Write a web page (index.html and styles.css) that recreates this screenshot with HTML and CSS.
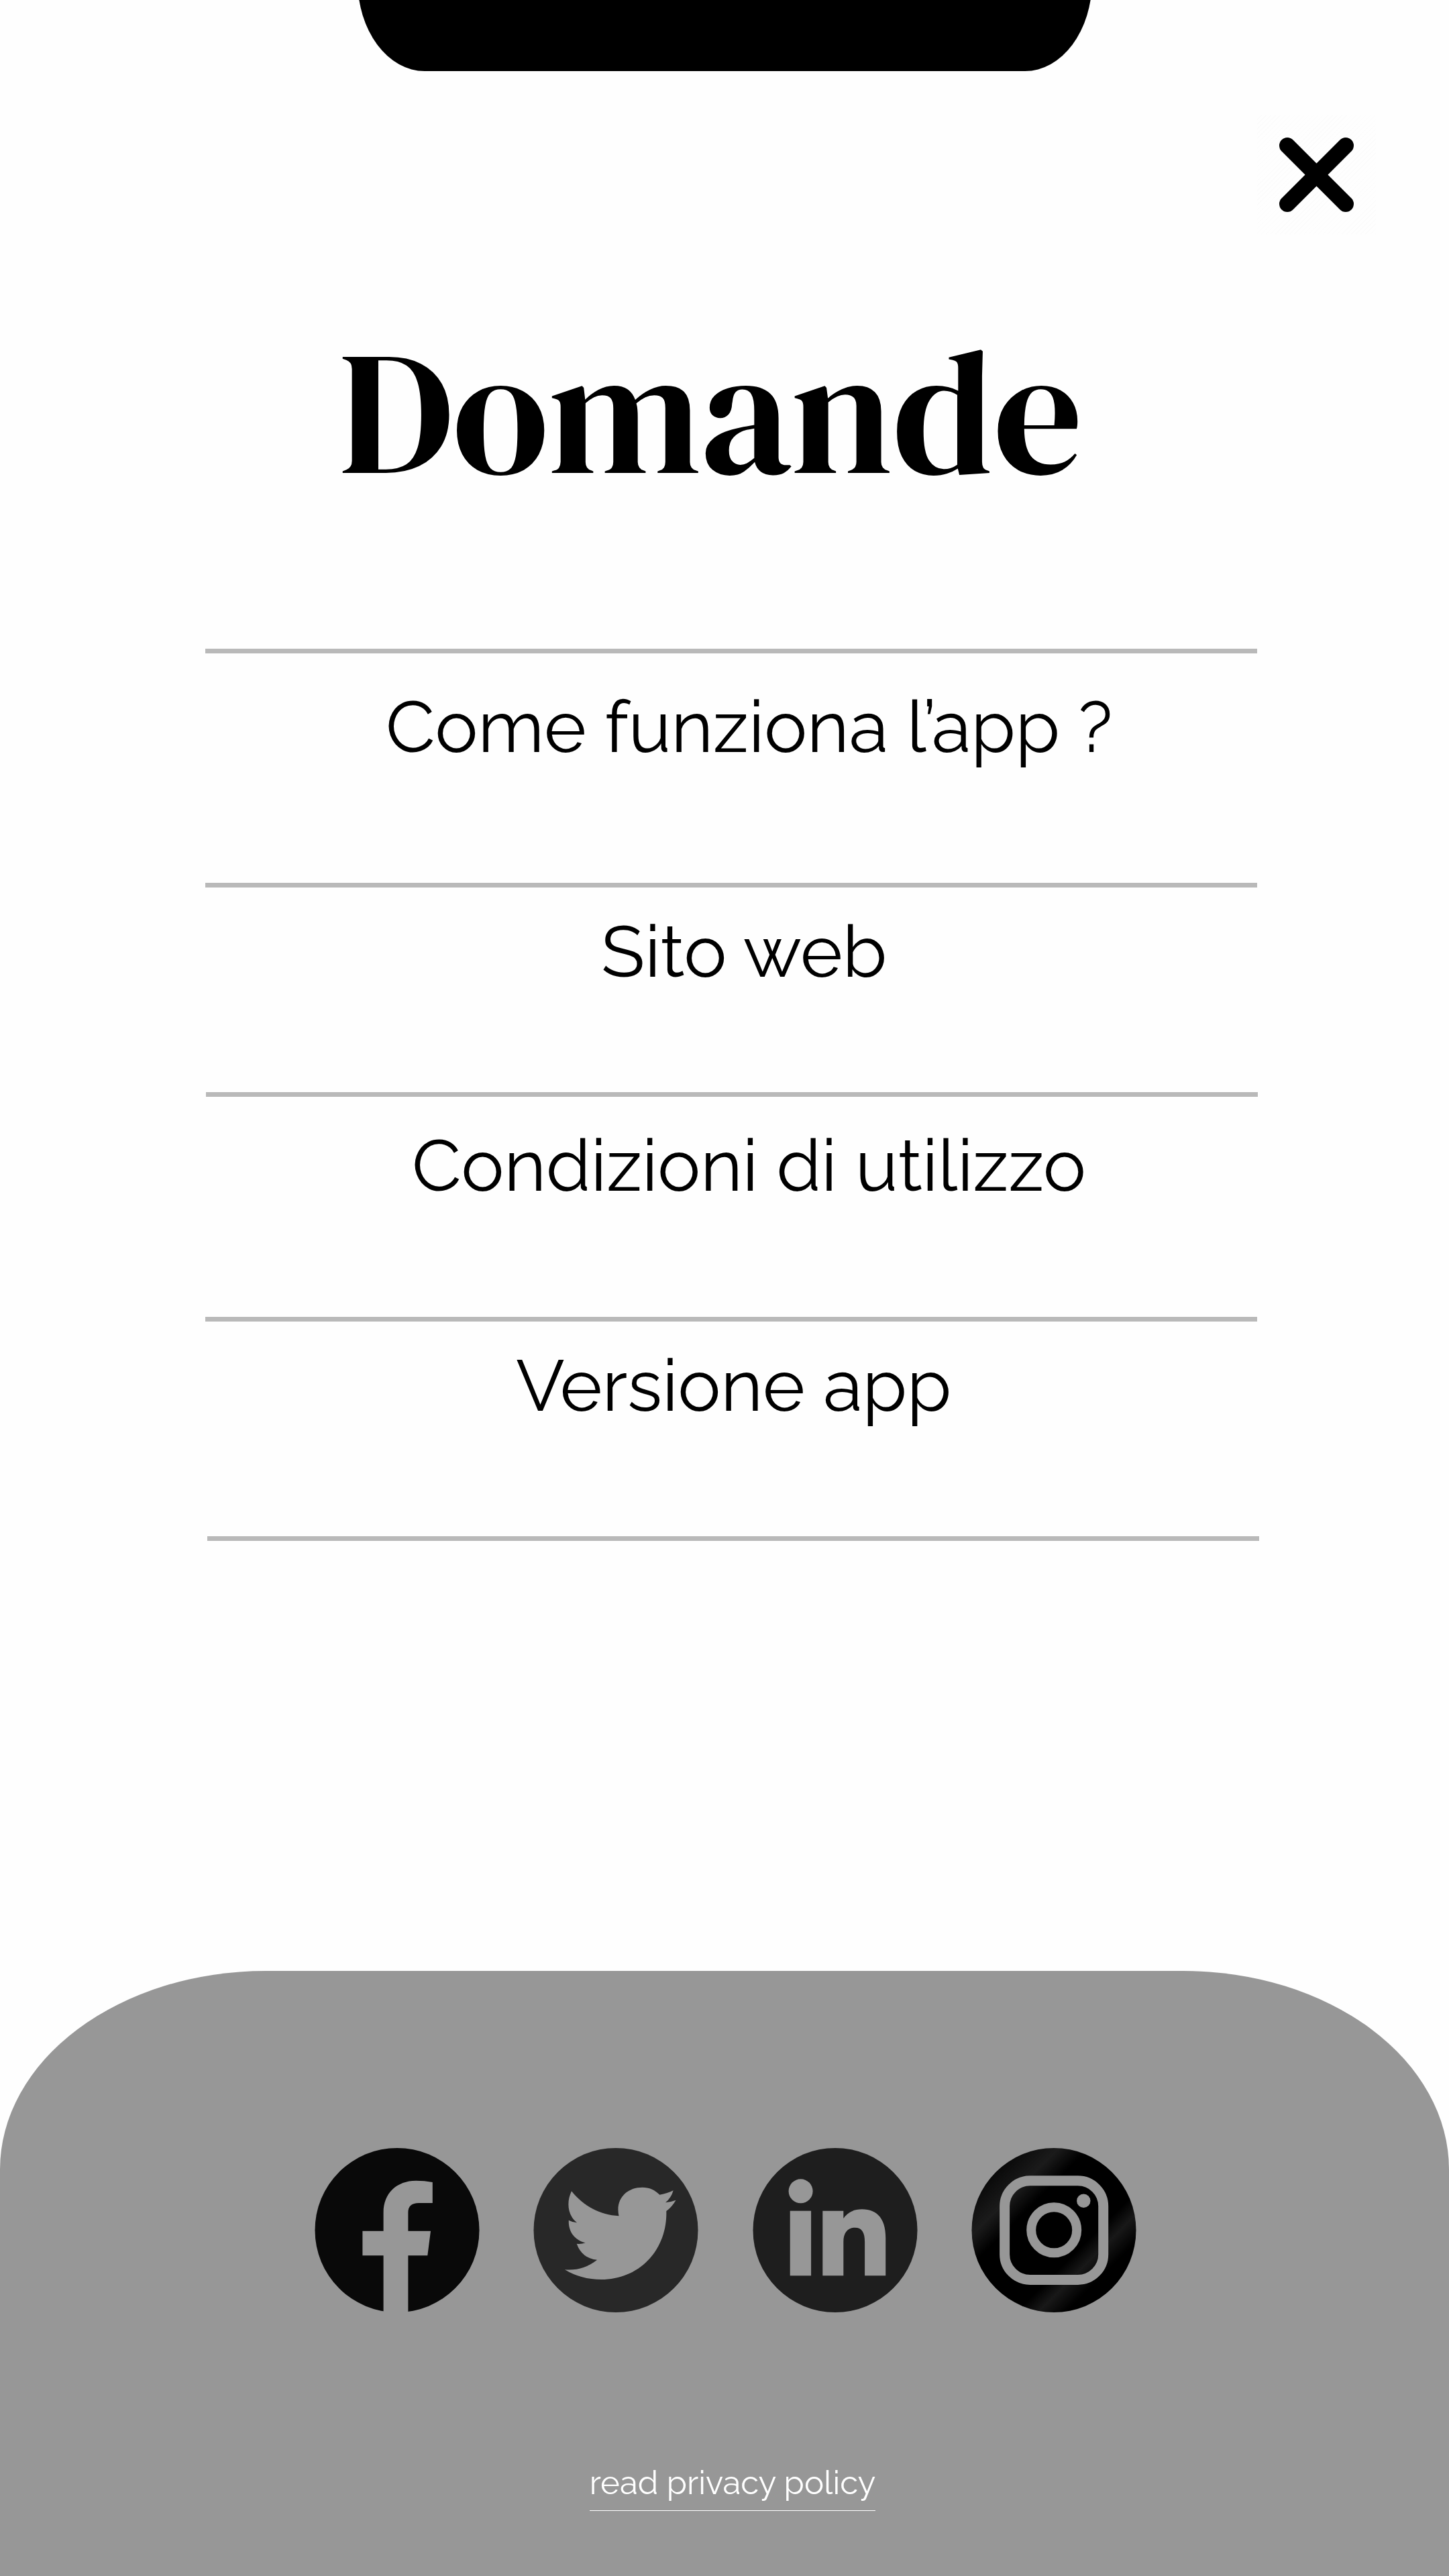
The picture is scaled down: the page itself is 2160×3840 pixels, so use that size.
FILE: index.html
```html
<!DOCTYPE html>
<html lang="it">
<head>
<meta charset="utf-8">
<title>Domande</title>
<link rel="stylesheet" href="styles.css">
</head>
<body>
<div class="screen">
  <div class="notch"></div>
  <header class="topbar">
    <button class="close" aria-label="Chiudi">
      <svg viewBox="0 0 177 177"><path d="M45 45L132 132M132 45L45 132"/></svg>
    </button>
  </header>
  <h1 class="title">Domande</h1>
  <ul class="menu">
    <li class="item item-how"><a class="label">Come funziona l’app ?</a></li>
    <li class="item item-site"><a class="label">Sito web</a></li>
    <li class="item item-terms"><a class="label">Condizioni di utilizzo</a></li>
    <li class="item item-version"><a class="label">Versione app</a></li>
  </ul>
  <footer class="footer">
    <nav class="social">
      <svg class="icon" viewBox="0 0 244 244">
        <circle cx="122" cy="122.5" r="122.5" fill="#090909"/>
        <path class="mark" d="M101.6 246V160.3H70.4V123.7h31.2V96C101.6 67 122 48.7 150 48.7Q163 48.7 174.8 51V82H154.2Q138.4 82 138.4 96V123.7H172L167.3 160.3H138.4V246Z"/>
      </svg>
      <svg class="icon" viewBox="0 0 244 244">
        <circle cx="122" cy="122.5" r="122.5" fill="#282828"/>
        <path class="mark" d="M56 64.3C73 86 99 100 126.500 101.300C121 76 138 58.700 161.700 58.700C172 58.700 180 62.500 187.400 69.700Q199 67.500 207.700 63.300Q204.500 74.500 196 81.300Q204 80.500 211.500 77.700Q206 87.500 197.300 94C199 151 158 196 100.400 196Q70 196 45.900 181.300Q73 183.500 94.100 166.700Q71.500 164.500 63.700 142.700Q70 143.800 76.700 141.300C60 137 51 124 51.800 107.700Q57.500 110.800 64 111.300C51 101 47.500 82 56 64.3Z"/>
      </svg>
      <svg class="icon" viewBox="0 0 244 244">
        <circle cx="122" cy="122.5" r="122.5" fill="#1e1e1e"/>
        <circle class="mark" cx="70.600" cy="64.300" r="18"/>
        <rect class="mark" x="54.700" y="93.700" width="31.400" height="96.600"/>
        <path class="mark" d="M103.300 93.700H134.300V105Q143.500 91.300 162 91.300C185 91.300 197.200 106 197.200 134V190.300H166.100V140C166.100 126 162 118.700 151.400 118.700C141 118.700 134.300 126 134.300 140V190.300H103.300Z"/>
      </svg>
      <svg class="icon" viewBox="0 0 244 244">
        <defs>
          <linearGradient id="sheen" gradientUnits="userSpaceOnUse" x1="30" y1="30" x2="214" y2="214">
            <stop offset="0" stop-color="#060606"/>
            <stop offset=".19" stop-color="#1b1b1b"/>
            <stop offset=".31" stop-color="#000"/>
            <stop offset=".68" stop-color="#000"/>
            <stop offset=".77" stop-color="#181818"/>
            <stop offset=".88" stop-color="#000"/>
          </linearGradient>
        </defs>
        <circle cx="122" cy="122.5" r="122.5" fill="url(#sheen)"/>
        <rect class="ring" x="48.600" y="48.800" width="147.100" height="147.600" rx="38" stroke-width="15"/>
        <circle class="ring" cx="122.200" cy="122.300" r="34" stroke-width="14"/>
        <circle class="mark" cx="166.300" cy="78.700" r="10.200"/>
      </svg>
    </nav>
    <a class="privacy">read privacy policy</a>
  </footer>
</div>
</body>
</html>
```
FILE: styles.css
```css
* { box-sizing: border-box; }
body { margin: 0; background: #fefefe; }
.screen {
  width: 2160px;
  height: 3840px;
  display: flex;
  flex-direction: column;
  font-family: Raleway, Lato, "Open Sans", sans-serif;
  color: #000;
}
.notch {
  width: 1095px;
  height: 106px;
  margin-left: 533px;
  overflow: hidden;
  flex: none;
}
.notch::before {
  content: "";
  display: block;
  height: 270px;
  margin-top: -164px;
  background: #000;
  border-radius: 100px / 135px;
}
.topbar {
  display: flex;
  justify-content: flex-end;
  padding: 66px 109px 0 0;
}
.close {
  width: 177px;
  height: 177px;
  padding: 0;
  border: 0;
  background: repeating-linear-gradient(135deg, #fefefe 0 4px, #fbfbfb 4px 5px);
}
.close svg { display: block; width: 100%; height: 100%; }
.close path { stroke: #000; stroke-width: 24; stroke-linecap: round; }
.title {
  margin: 115px 0 0 505px;
  font: 400 262px/300px "DM Serif Display", "Liberation Serif", serif;
}
.menu {
  list-style: none;
  width: 1568px;
  margin: 203px 0 0 306px;
  padding: 0;
}
.item { border-top: 7px solid #b9b9b9; }
.label { display: block; font-size: 107.3px; line-height: 107px; white-space: nowrap; }
.item-how { height: 349px; padding: 56px 0 0 269px; }
.item-site { height: 312px; padding: 42px 0 0 590px; }
.item-terms { height: 335px; padding: 49px 0 0 307px; margin: 0 -1px 0 1px; }
.item-version { height: 327px; padding: 42px 0 0 463px; }
.menu::after {
  content: "";
  display: block;
  height: 7px;
  margin: 0 -3px 0 3px;
  background: #b9b9b9;
}
.footer {
  margin-top: auto;
  height: 902px;
  display: flex;
  flex-direction: column;
  align-items: center;
  background: #979797;
  border-radius: 396px 396px 0 0 / 296px 296px 0 0;
  padding-top: 264px;
}
.social { display: flex; gap: 82.3px; margin-left: 3px; }
.icon { width: 244px; height: 244px; display: block; overflow: visible; }
.mark { fill: #979797; }
.ring { fill: none; stroke: #979797; }
.privacy {
  margin: 226px 0 0 24px;
  padding-bottom: 12px;
  font-size: 49.1px;
  line-height: 58px;
  color: #fff;
  border-bottom: 1px solid #fff;
}
```
